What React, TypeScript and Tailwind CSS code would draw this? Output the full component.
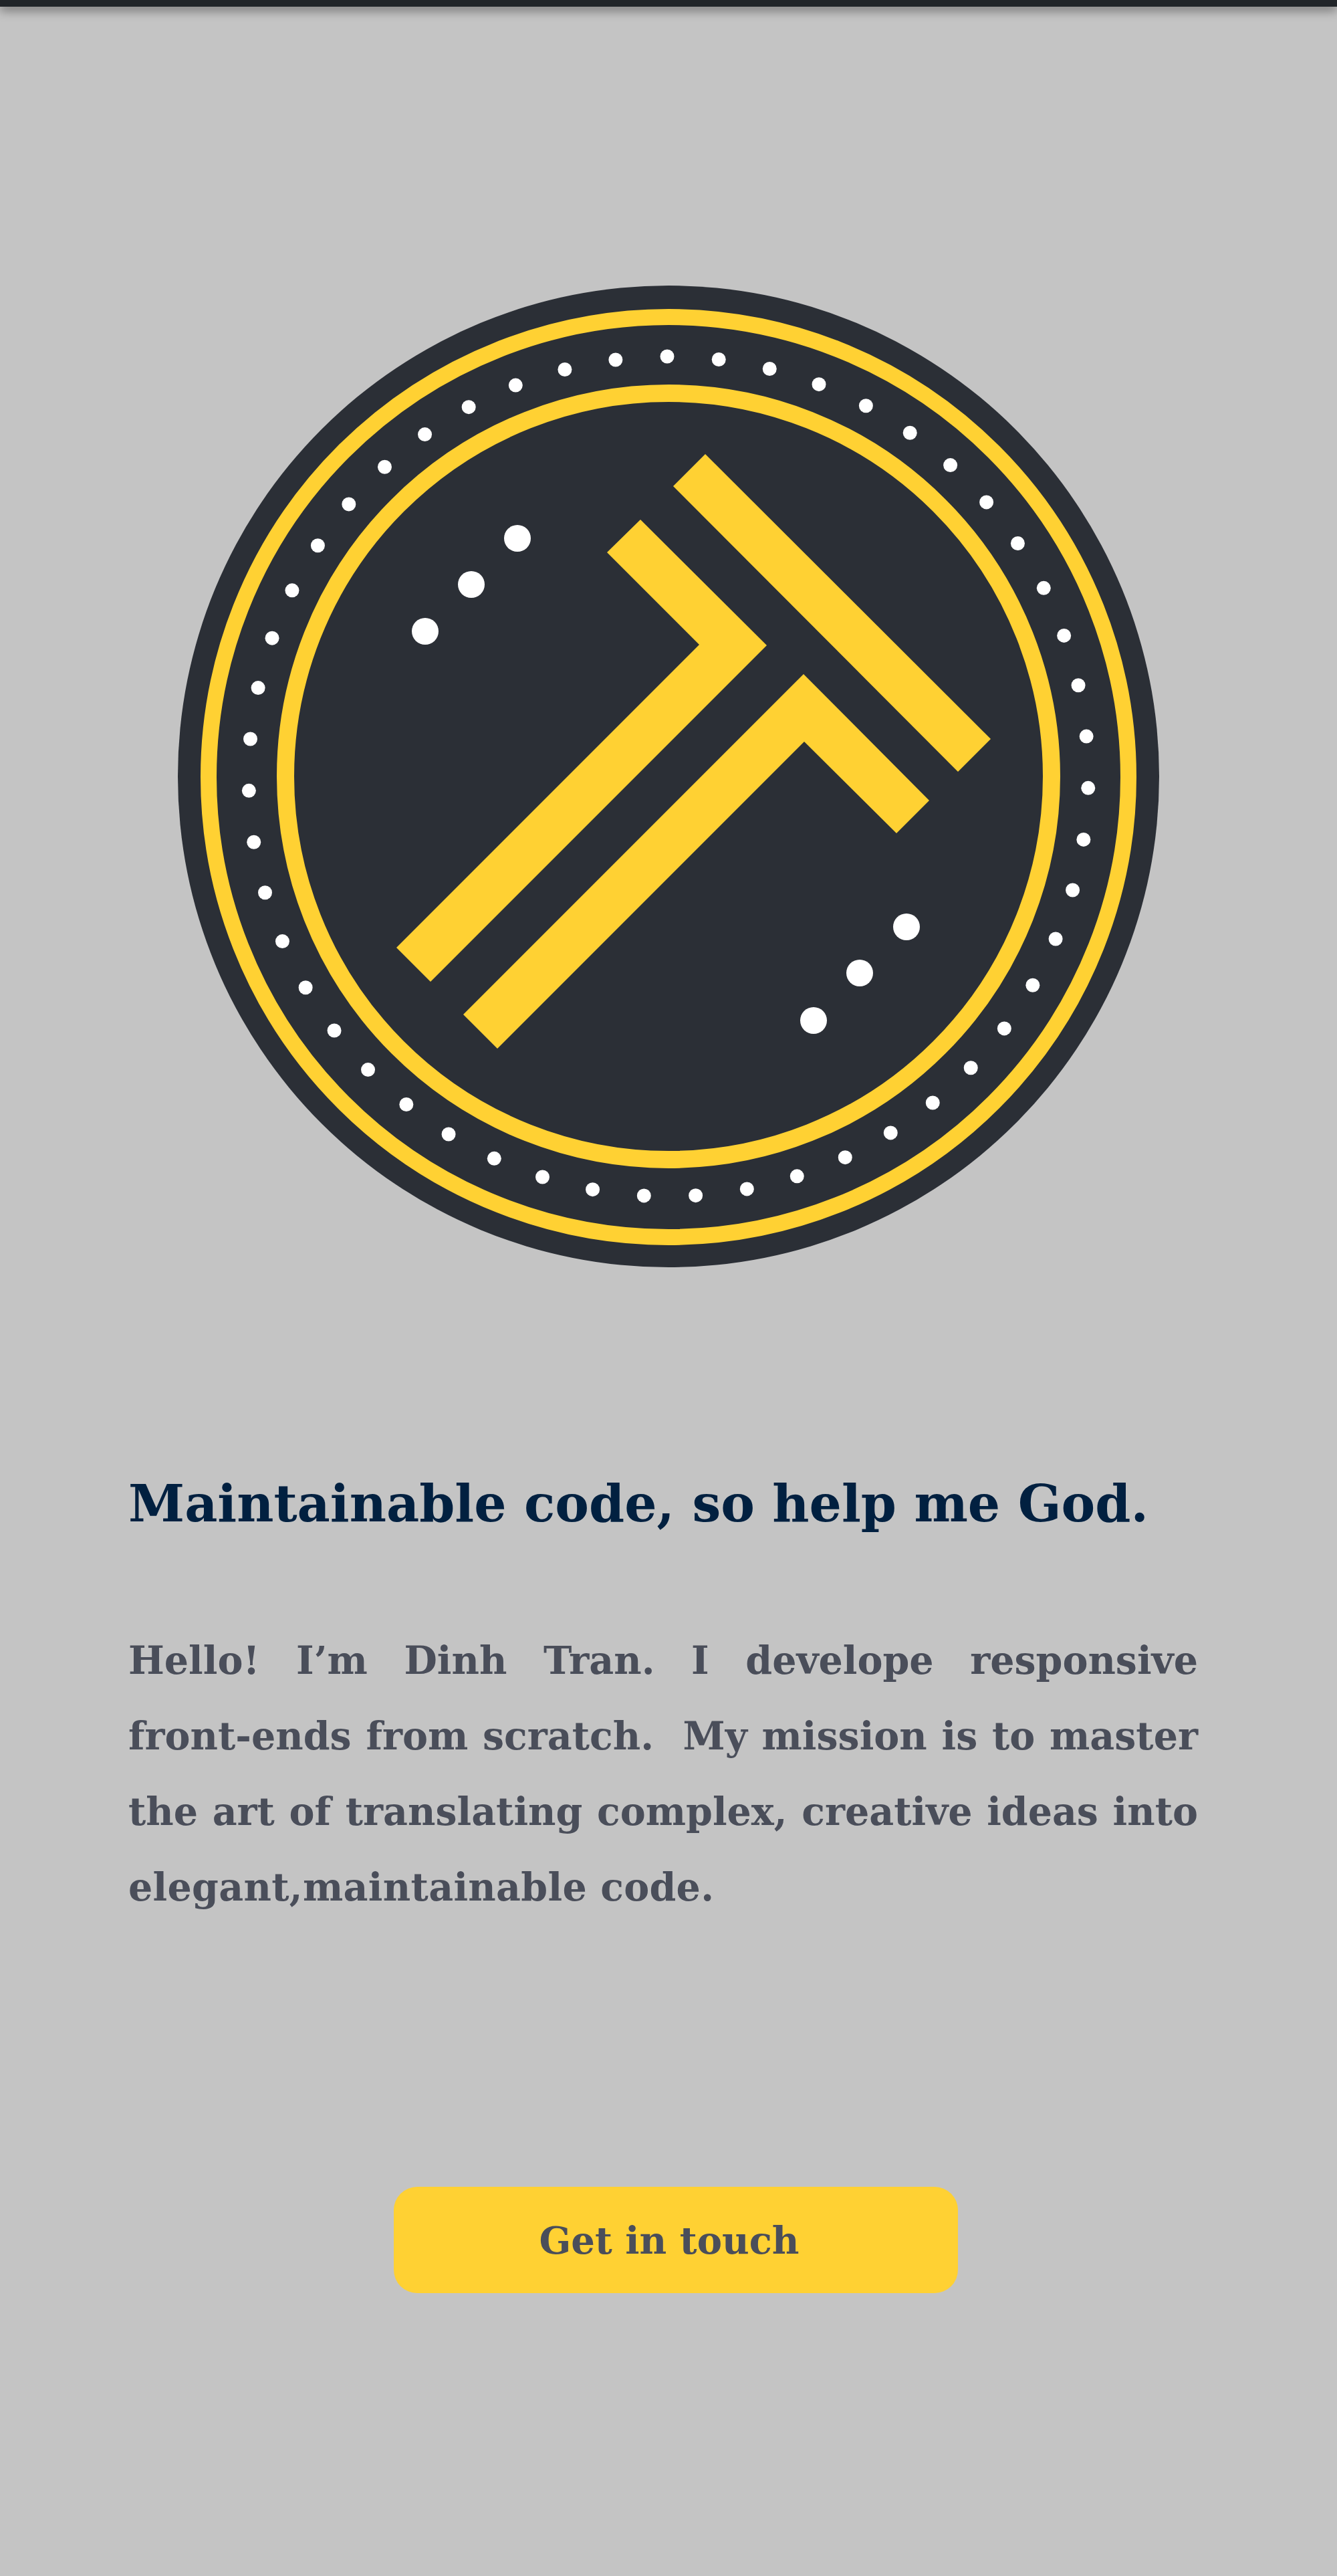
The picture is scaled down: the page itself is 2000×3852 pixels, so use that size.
const yellow = "#ffd133"
const dark = "#2b2f36"
const cx = 1001
const cy = 1161

// 51 little dots round the badge, the first one sits just left of the top
const ringDots = Array.from({ length: 51 }, (_, i) => {
  const a = ((-0.18 + (i * 360) / 51) * Math.PI) / 180
  return { x: cx + Math.sin(a) * 628, y: cy - Math.cos(a) * 628 }
})

const bigDots = [
  [775, 805],
  [706, 874],
  [637, 944],
  [1357, 1386],
  [1287, 1455],
  [1218, 1526],
]

function Logo() {
  return (
    <svg viewBox="266 426 1470 1470" className="block w-[1470px] h-[1470px]">
      <circle cx={cx} cy={cy} r={734} fill={dark} />
      <circle cx={cx} cy={cy + 1} r={688} fill="none" stroke={yellow} strokeWidth={24} />
      <circle cx={cx} cy={cy} r={573} fill="none" stroke={yellow} strokeWidth={26} />
      {ringDots.map((d, i) => (
        <circle key={i} cx={d.x} cy={d.y} r={10.5} fill="#fff" />
      ))}
      {bigDots.map(([x, y], i) => (
        <circle key={i} cx={x} cy={y} r={20} fill="#fff" />
      ))}
      <polygon fill={yellow} points="1008,727 1056,679 1483,1105 1434,1154" />
      <polygon fill={yellow} points="909,826 959,777 1148,965 645,1468 594,1417 1047,964" />
      <polygon fill={yellow} points="1203,1008 1391,1197 1342,1246 1204,1109 745,1568 694,1517" />
    </svg>
  )
}

export default function App() {
  return (
    <div className="min-h-[3852px] bg-[#c4c4c4] font-['DejaVu_Serif',serif] font-bold">
      <div className="h-[10px] bg-[#212529] shadow-[0_5px_15px_rgba(0,0,0,0.5)]" />
      <div className="flex justify-center pt-[416px]">
        <Logo />
      </div>
      <div className="px-[192px]">
        <h1 className="mt-[303px] text-[76px] leading-[100px] text-[#012040] whitespace-nowrap">
          Maintainable code, so help me God.
        </h1>
        <p className="mt-[127px] w-[1600px] text-[57px] leading-[113px] [word-spacing:-6px] text-[#4a4e5a]">
          <span className="block [text-align-last:justify]">Hello! I’m Dinh Tran. I develope responsive</span>
          <span className="block [text-align-last:justify]">front-ends from scratch.&nbsp; My mission is to master</span>
          <span className="block [text-align-last:justify]">the art of translating complex, creative ideas into</span>
          <span className="block tracking-[0.3px] [word-spacing:0px]">elegant,maintainable code.</span>
        </p>
      </div>
      <div className="pl-[589px] mt-[392px]">
        <button className="w-[844px] h-[159px] rounded-[35px] bg-[#ffd133] text-[56px] pr-[20px] text-[#4a4e5a]">
          Get in touch
        </button>
      </div>
    </div>
  )
}
